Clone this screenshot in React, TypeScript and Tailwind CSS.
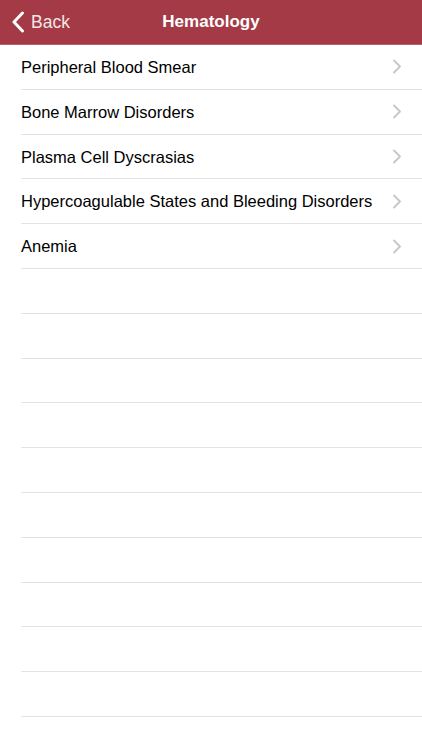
const topics = [
  'Peripheral Blood Smear',
  'Bone Marrow Disorders',
  'Plasma Cell Dyscrasias',
  'Hypercoagulable States and Bleeding Disorders',
  'Anemia',
];

const emptyRows = 10;

function Disclosure() {
  return (
    <svg width="10" height="15" viewBox="0 0 10 15" fill="none">
      <path d="M2 1.5 L8 7.5 L2 13.5" stroke="#c5c5ca" strokeWidth="1.8" strokeLinecap="round" strokeLinejoin="round" />
    </svg>
  );
}

export default function App() {
  return (
    <div className="w-[422px] h-[750px] overflow-hidden bg-white" style={{ fontFamily: '"Liberation Sans", Arial, sans-serif' }}>
      <header className="relative h-[45px] bg-[#a33a46] border-b border-[#b8606a] flex items-center justify-center">
        <button className="absolute left-[11px] top-0 h-full flex items-center gap-[6px] text-white">
          <svg width="14" height="22" viewBox="0 0 14 22" fill="none">
            <path d="M11.5 2 L3 11 L11.5 20" stroke="white" strokeWidth="3" strokeLinecap="round" strokeLinejoin="round" />
          </svg>
          <span className="text-[17.5px] text-[#f5e6e8]">Back</span>
        </button>
        <h1 className="text-[17px] font-bold text-white">Hematology</h1>
      </header>
      <ul>
        {topics.map((t) => (
          <li key={t} className="h-[44.8px] ml-[21px] pr-[20px] border-b border-[#e3e3e6] flex items-center justify-between">
            <span className="text-[16.5px] text-black pt-[1px]">{t}</span>
            <Disclosure />
          </li>
        ))}
        {Array.from({ length: emptyRows }).map((_, i) => (
          <li key={i} className="h-[44.8px] ml-[21px] border-b border-[#e3e3e6]" />
        ))}
      </ul>
    </div>
  );
}
